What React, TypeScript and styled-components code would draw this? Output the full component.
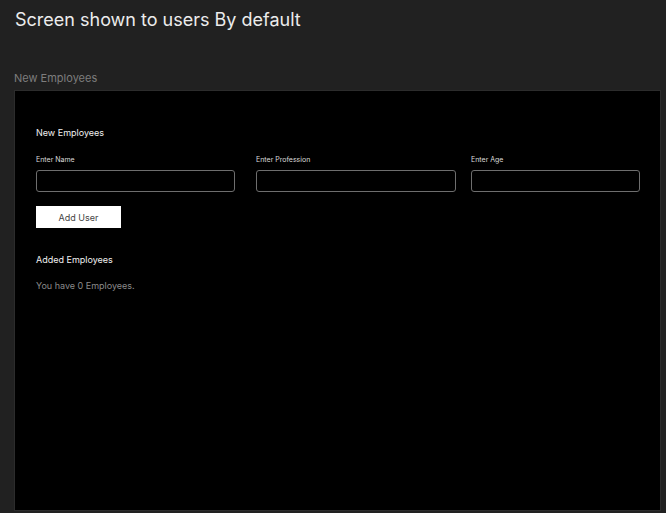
import React from "react";
import styled, { createGlobalStyle } from "styled-components";

const GlobalStyle = createGlobalStyle`
  html, body {
    margin: 0;
    padding: 0;
    background: #212121;
  }
  body {
    font-family: Inter, "Noto Sans", sans-serif;
  }
`;

const Page = styled.div`
  width: 666px;
  height: 513px;
  box-sizing: border-box;
  padding: 9px 5px 2px 14px;
  background: #212121;
  display: flex;
  flex-direction: column;
  overflow: hidden;
`;

const Title = styled.h1`
  margin: 0 0 0 1px;
  font-size: 18px;
  font-weight: 400;
  line-height: 22px;
  color: #ececec;
`;

const SectionLabel = styled.div`
  margin-top: 40px;
  font-size: 11px;
  line-height: 14px;
  color: #7d7d7d;
`;

const Panel = styled.div`
  margin-top: 5px;
  flex: 1;
  background: #000;
  border: 1px solid #2c2c2c;
  padding: 36px 20px 0 21px;
  display: flex;
  flex-direction: column;
`;

const Heading = styled.div`
  font-size: 9px;
  line-height: 12px;
  color: #f0f0f0;
`;

const FieldRow = styled.div`
  display: flex;
  margin-top: 16px;
`;

const Field = styled.div<{ $w: number; $gap: number }>`
  width: ${(p) => p.$w}px;
  margin-right: ${(p) => p.$gap}px;
  display: flex;
  flex-direction: column;
`;

const Label = styled.label`
  font-size: 7px;
  line-height: 9px;
  color: #dcdcdc;
`;

const Input = styled.input`
  margin-top: 6px;
  height: 22px;
  box-sizing: border-box;
  background: #000;
  border: 1px solid #6e6e6e;
  border-radius: 3px;
  outline: none;
  color: #fff;
  padding: 0 6px;
  font-family: inherit;
`;

const Button = styled.button`
  margin-top: 14px;
  width: 85px;
  height: 22px;
  background: #fff;
  border: none;
  border-radius: 0;
  font-family: inherit;
  font-size: 9px;
  color: #444;
  padding: 0;
  cursor: pointer;
`;

const SubHeading = styled.div`
  margin-top: 26px;
  font-size: 9px;
  line-height: 12px;
  color: #f0f0f0;
`;

const Empty = styled.div`
  margin-top: 14px;
  font-size: 9px;
  line-height: 12px;
  color: #8a8a8a;
`;

const fields = [
  { label: "Enter Name", w: 199, gap: 21 },
  { label: "Enter Profession", w: 200, gap: 15 },
  { label: "Enter Age", w: 169, gap: 0 },
];

export default function App() {
  return (
    <>
      <GlobalStyle />
      <Page>
        <Title>Screen shown to users By default</Title>
        <SectionLabel>New Employees</SectionLabel>
        <Panel>
          <Heading>New Employees</Heading>
          <FieldRow>
            {fields.map((f) => (
              <Field key={f.label} $w={f.w} $gap={f.gap}>
                <Label>{f.label}</Label>
                <Input type="text" />
              </Field>
            ))}
          </FieldRow>
          <div>
            <Button>Add User</Button>
          </div>
          <SubHeading>Added Employees</SubHeading>
          <Empty>You have 0 Employees.</Empty>
        </Panel>
      </Page>
    </>
  );
}
